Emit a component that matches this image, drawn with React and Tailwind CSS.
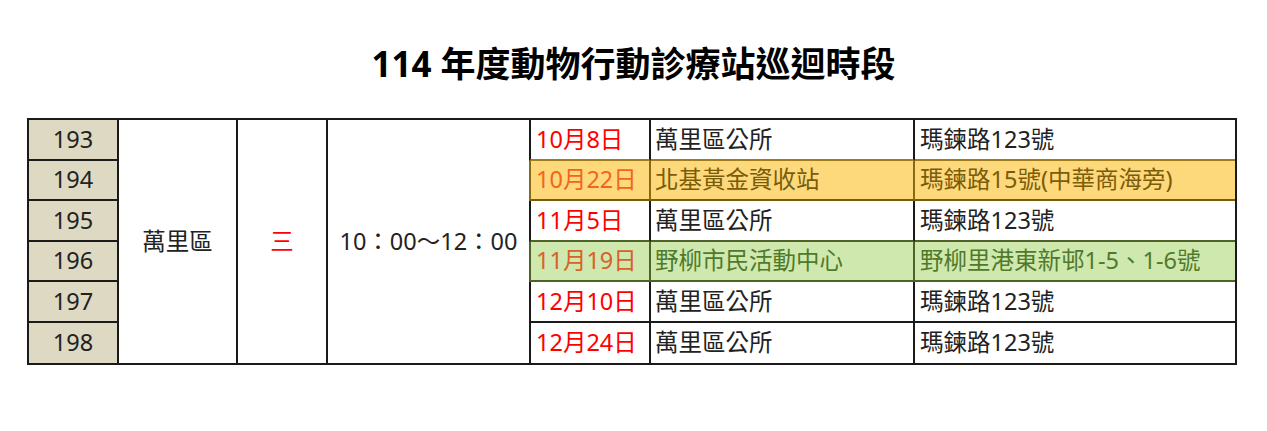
import React from 'react';

const rows = [
    { no: '193', date: '10月8日', place: '萬里區公所', addr: '瑪鍊路123號', tone: 'plain', line: 'border-b-[#a07d1c]' },
    { no: '194', date: '10月22日', place: '北基黃金資收站', addr: '瑪鍊路15號(中華商海旁)', tone: 'yellow', line: 'border-b-[#7a5c10]' },
    { no: '195', date: '11月5日', place: '萬里區公所', addr: '瑪鍊路123號', tone: 'plain', line: 'border-b-[#4f6228]' },
    { no: '196', date: '11月19日', place: '野柳市民活動中心', addr: '野柳里港東新邨1-5、1-6號', tone: 'green', line: 'border-b-[#4f6228]' },
    { no: '197', date: '12月10日', place: '萬里區公所', addr: '瑪鍊路123號', tone: 'plain', line: 'border-b-[#1a1a1a]' },
    { no: '198', date: '12月24日', place: '萬里區公所', addr: '瑪鍊路123號', tone: 'plain', line: 'border-b-0' },
];

const tones = {
    plain: { bg: 'bg-white', side: 'border-[#1a1a1a]', date: 'text-[#ff0000]', text: 'text-[#222222]' },
    yellow: { bg: 'bg-[#fdd97c]', side: 'border-[#8a6a14]', date: 'text-[#f5641c]', text: 'text-[#7a5c0a]' },
    green: { bg: 'bg-[#cfe8ae]', side: 'border-[#4f6228]', date: 'text-[#d8612a]', text: 'text-[#4f7a2a]' },
};

const App = () => {
    return (
        <div
            className="w-[1267px] h-[431px] bg-white pt-[43px]"
            style={{ fontFamily: '"Noto Sans", "Noto Sans CJK TC", sans-serif' }}
        >
            <h1 className="text-center text-[35px] leading-[42px] font-bold text-black">
                114 年度動物行動診療站巡迴時段
            </h1>

            <div className="ml-[27px] mt-[33px] w-[1210px] h-[247px] border-2 border-[#1a1a1a] grid grid-cols-[90px_119px_90px_201px_122px_264px_320px] grid-rows-[repeat(6,1fr)] text-[23.5px] leading-none">
                {rows.map((r, i) => (
                    <div
                        key={r.no}
                        className={`col-start-1 bg-[#ddd9c3] border-r-2 border-[#1a1a1a] flex items-center justify-center text-[#222222] ${i < 5 ? 'border-b-2' : ''}`}
                        style={{ gridRow: i + 1 }}
                    >
                        {r.no}
                    </div>
                ))}

                <div className="col-start-2 row-start-1 row-span-6 border-r-2 border-[#1a1a1a] flex items-center justify-center text-[#222222]">
                    萬里區
                </div>
                <div className="col-start-3 row-start-1 row-span-6 border-r-2 border-[#1a1a1a] flex items-center justify-center text-[#ff0000]">
                    三
                </div>
                <div className="col-start-4 row-start-1 row-span-6 flex items-center justify-center text-[#222222] whitespace-nowrap">
                    10：00～12：00
                </div>

                {rows.map((r, i) => {
                    const t = tones[r.tone];
                    const under = i < 5 ? `border-b-2 ${r.line}` : '';
                    return (
                        <React.Fragment key={r.date}>
                            <div
                                className={`col-start-5 ${t.bg} border-l-2 border-r-2 ${t.side} ${under} ${t.date} flex items-center pl-[5px] whitespace-nowrap`}
                                style={{ gridRow: i + 1 }}
                            >
                                {r.date}
                            </div>
                            <div
                                className={`col-start-6 ${t.bg} border-r-2 ${t.side} ${under} ${t.text} flex items-center pl-[4px] whitespace-nowrap`}
                                style={{ gridRow: i + 1 }}
                            >
                                {r.place}
                            </div>
                            <div
                                className={`col-start-7 ${t.bg} ${under} ${t.text} flex items-center pl-[5px] whitespace-nowrap`}
                                style={{ gridRow: i + 1 }}
                            >
                                {r.addr}
                            </div>
                        </React.Fragment>
                    );
                })}
            </div>
        </div>
    );
};

export default App;
